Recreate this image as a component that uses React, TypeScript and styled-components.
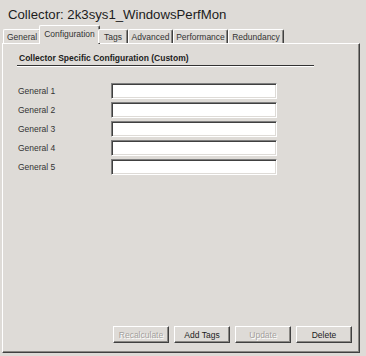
import React from "react"
import styled, { createGlobalStyle } from "styled-components"

type Tab = { label: string; width: number }

const tabs: Tab[] = [
  { label: "General", width: 38 },
  { label: "Configuration", width: 61 },
  { label: "Tags", width: 30 },
  { label: "Advanced", width: 45 },
  { label: "Performance", width: 55 },
  { label: "Redundancy", width: 56 },
]

const fields = ["General 1", "General 2", "General 3", "General 4", "General 5"]

const buttons = [
  { label: "Recalculate", disabled: true },
  { label: "Add Tags", disabled: false },
  { label: "Update", disabled: true },
  { label: "Delete", disabled: false },
]

const App: React.FunctionComponent = () => {
  const active = "Configuration"

  return (
    <>
      <GlobalStyle />
      <Window>
        {/* Title */}
        <Title>{"Collector: 2k3sys1_WindowsPerfMon"}</Title>

        {/* Tab strip */}
        <TabStrip>
          {tabs.map((tab) => (
            <TabItem key={tab.label} $width={tab.width} $active={tab.label === active}>
              {tab.label}
            </TabItem>
          ))}
        </TabStrip>

        {/* Tab page */}
        <Panel>
          <GroupHeading>{"Collector Specific Configuration (Custom)"}</GroupHeading>

          <Form>
            {fields.map((field) => (
              <Row key={field}>
                <Label>{field}</Label>
                <TextInput type="text" />
              </Row>
            ))}
          </Form>

          <ButtonBar>
            {buttons.map((b) => (
              <Button key={b.label} disabled={b.disabled}>
                {b.label}
              </Button>
            ))}
          </ButtonBar>
        </Panel>
      </Window>
    </>
  )
}

export default App

/**
 * Styled components
 */

const GlobalStyle = createGlobalStyle`
  html, body {
    margin: 0;
    padding: 0;
    background: #dedbd7;
  }
  body {
    font-family: "Liberation Sans", Arial, sans-serif;
  }
`

const Window = styled("div")`
  display: flex;
  flex-direction: column;
  width: 366px;
  height: 356px;
  background: #dedbd7;
  color: #2c2c2c;
  overflow: hidden;
`

const Title = styled("div")`
  height: 25px;
  padding: 7px 0 0 8px;
  box-sizing: border-box;
  font-size: 13.2px;
  line-height: 15px;
  color: #1c1c1c;
`

const TabStrip = styled("div")`
  display: flex;
  align-items: flex-end;
  height: 18px;
  padding-left: 3px;
  position: relative;
  z-index: 1;
`

const TabItem = styled("div")<{ $width: number; $active: boolean }>`
  box-sizing: border-box;
  width: ${(p) => p.$width}px;
  height: ${(p) => (p.$active ? 19 : 14)}px;
  margin: ${(p) => (p.$active ? "0 -2px -1px -2px" : "0")};
  padding-top: ${(p) => (p.$active ? 3 : 2)}px;
  text-align: center;
  font-size: 8.5px;
  line-height: 10px;
  color: #333;
  background: #dedbd7;
  border-top: 1px solid #ffffff;
  border-left: 1px solid #ffffff;
  border-right: 1px solid #404040;
  box-shadow: inset -1px 0 0 #8a8884;
  border-radius: 2px 2px 0 0;
`

const Panel = styled("div")`
  display: flex;
  flex-direction: column;
  box-sizing: border-box;
  width: 358px;
  height: 310px;
  margin-left: 2px;
  padding: 9px 7px 9px 13px;
  border-top: 1px solid #ffffff;
  border-left: 1px solid #ffffff;
  border-right: 1px solid #404040;
  border-bottom: 1px solid #404040;
  box-shadow: inset -1px -1px 0 #8a8884;
`

const GroupHeading = styled("div")`
  width: 295px;
  margin-left: 1px;
  padding: 0 0 2px 2px;
  font-size: 8.5px;
  font-weight: bold;
  line-height: 10px;
  color: #1c1c1c;
  border-bottom: 1px solid #333;
  box-shadow: 0 1px 0 #ffffff;
`

const Form = styled("div")`
  display: flex;
  flex-direction: column;
  gap: 3px;
  margin-top: 17px;
`

const Row = styled("div")`
  display: grid;
  grid-template-columns: 95px 166px;
  align-items: center;
  height: 16px;
`

const Label = styled("span")`
  padding-left: 2px;
  font-size: 8.5px;
  color: #333;
`

const TextInput = styled("input")`
  box-sizing: border-box;
  width: 166px;
  height: 16px;
  margin: 0;
  padding: 0 3px;
  background: #ffffff;
  border-top: 1px solid #7f7f7f;
  border-left: 1px solid #7f7f7f;
  border-right: 1px solid #ffffff;
  border-bottom: 1px solid #ffffff;
  box-shadow: inset 1px 1px 0 #404040, inset -1px -1px 0 #dedbd7;
  outline: none;
  font-family: inherit;
  font-size: 8.5px;
`

const ButtonBar = styled("div")`
  display: flex;
  justify-content: flex-end;
  gap: 5px;
  margin-top: auto;
`

const Button = styled("button")`
  box-sizing: border-box;
  width: 56px;
  height: 17px;
  padding: 0;
  font-family: inherit;
  font-size: 8.5px;
  color: #1c1c1c;
  background: #dedbd7;
  border-top: 1px solid #ffffff;
  border-left: 1px solid #ffffff;
  border-right: 1px solid #404040;
  border-bottom: 1px solid #404040;
  box-shadow: inset -1px -1px 0 #8a8884;

  &:disabled {
    color: #a4a19d;
    text-shadow: 1px 1px 0 #ffffff;
  }
`
